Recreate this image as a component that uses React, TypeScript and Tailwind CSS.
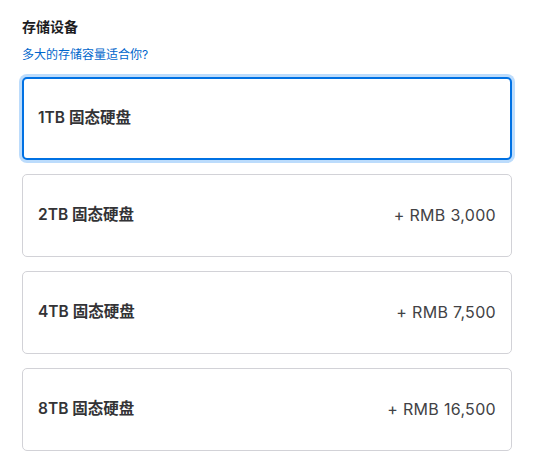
const options = [
  { name: "1TB 固态硬盘", price: "" },
  { name: "2TB 固态硬盘", price: "+ RMB 3,000" },
  { name: "4TB 固态硬盘", price: "+ RMB 7,500" },
  { name: "8TB 固态硬盘", price: "+ RMB 16,500" },
];

export default function App() {
  const selected = 0;

  return (
    <div
      className="min-h-[457px] bg-white pl-[22px] pt-[17px]"
      style={{ fontFamily: 'Inter, "Noto Sans CJK SC", sans-serif' }}
    >
      <h2 className="text-[14px] leading-[20px] font-semibold text-[#1d1d1f]">
        存储设备
      </h2>
      <a className="mt-[9px] block text-[12px] leading-[18px] text-[#0066cc]">
        多大的存储容量适合你?
      </a>

      <div className="mt-[13px] flex w-[490px] flex-col gap-[14px]">
        {options.map((opt, i) => (
          <div
            key={opt.name}
            className={`flex h-[83px] items-center justify-between rounded-[5px] bg-white pb-px ${
              i === selected
                ? "border-2 border-[#0071e3] px-[14px] ring-[3px] ring-[#bcdcfc]"
                : "border border-[#d2d2d7] px-[15px]"
            }`}
          >
            <span className="text-[15.5px] font-semibold text-[#333336]">
              {opt.name}
            </span>
            {opt.price && (
              <span className="text-[16px] tracking-[0.02em] text-[#424245]">
                {opt.price}
              </span>
            )}
          </div>
        ))}
      </div>
    </div>
  );
}
